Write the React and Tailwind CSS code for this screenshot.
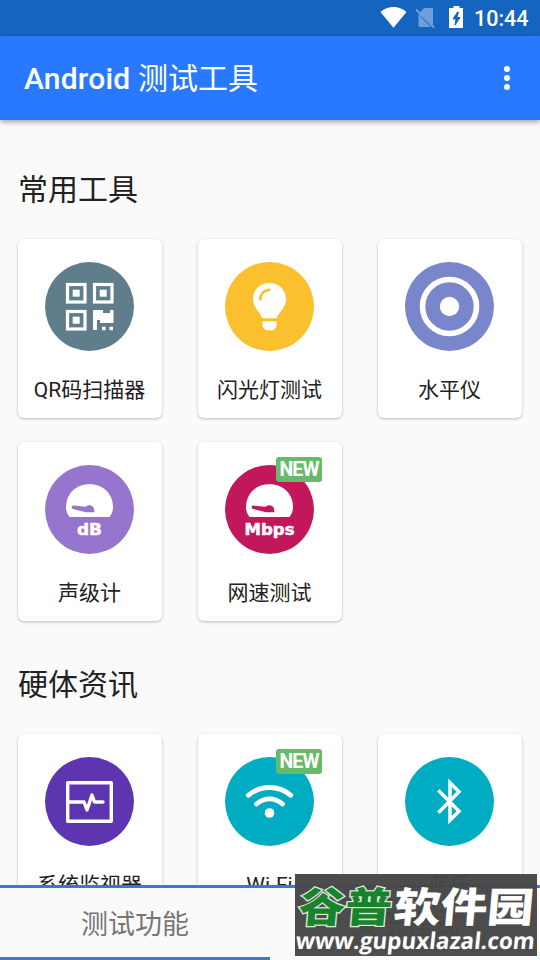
function QrIcon() {
  return (
    <g>
      {[[21, 21], [48, 21], [21, 48]].map(([x, y]) => (
        <g key={`${x}-${y}`}>
          <rect x={x + 1.5} y={y + 1.5} width="17.5" height="17.5" fill="none" stroke="#fff" strokeWidth="3.2" />
          <rect x={x + 6.7} y={y + 6.7} width="7" height="7" fill="#fff" />
        </g>
      ))}
      <path d="M48 48h10v3h7v-3h3.500v13H55v-3h-3v10h-4z" fill="#fff" />
      <path d="M57 64.800h3.500v3.500H57zM64.500 64.800H68v3.500h-3.500z" fill="#fff" />
    </g>
  )
}

function BulbIcon() {
  return (
    <g>
      <path
        d="M44.500 21c-9.500 0-16.500 7-16.500 16 0 8.500 6 11.500 9.500 19.200h14c3.500-7.700 9.500-10.700 9.500-19.200 0-9-7-16-16.500-16z"
        fill="#fff"
      />
      <path d="M35.300 37.300c0-5.300 3.700-9.300 9-9.500" fill="none" stroke="#fbc02d" strokeWidth="2.700" strokeLinecap="round" />
      <path d="M37.500 59.200h14v3.500c0 3-2.500 5.600-5 5.600h-4c-2.500 0-5-2.600-5-5.600z" fill="#fff" />
    </g>
  )
}

function LevelIcon() {
  return (
    <g>
      <circle cx="44.500" cy="44.500" r="27" fill="none" stroke="#fff" strokeWidth="5.600" />
      <circle cx="44.500" cy="44.500" r="9.700" fill="#fff" />
    </g>
  )
}

function GaugeIcon({ color, label, width }) {
  return (
    <g>
      <path d="M24.500 52C22.200 48.500 21 46 21 42.500 21 29.500 30 19.300 44.500 19.300S68 29.500 68 42.500c0 3.500-1.200 6-3.500 9.500z" fill="#fff" />
      <path d="M28.300 40.600l12.300 1.200c1.800-2.400 6.700-2.200 8.200 1.200l.7 4.200H41l-13-3.300c-2-.6-1.600-3.400.3-3.300z" fill={color} />
      <text
        x="44.500"
        y="70.300"
        textAnchor="middle"
        textLength={width}
        lengthAdjust="spacingAndGlyphs"
        fill="#fff"
        stroke="#fff"
        strokeWidth="0.500"
        className="font-['DejaVu_Sans',sans-serif] text-[16px] font-bold"
      >
        {label}
      </text>
    </g>
  )
}

function MonitorIcon() {
  return (
    <g fill="none" stroke="#fff" strokeWidth="3.400" strokeLinejoin="round" strokeLinecap="round">
      <rect x="22.700" y="25.700" width="43.600" height="38.600" />
      <path d="M23 45h16l3 8 5-15 2.500 7H58" />
    </g>
  )
}

function WifiIcon() {
  return (
    <g fill="none" stroke="#fff" strokeWidth="4.800">
      <path d="M23.300 38.300c12.500-10.400 30-10.400 42.500 0" strokeLinecap="round" />
      <path d="M31.500 47c7.800-6.800 18.200-6.800 26 0" strokeLinecap="round" />
      <circle cx="44.500" cy="56" r="4.800" fill="#fff" stroke="none" />
    </g>
  )
}

function BluetoothIcon() {
  return (
    <path
      d="M33.300 33.200L54 54.300 45 63.300V25.700L54 34.700 33.300 55.800"
      fill="none"
      stroke="#fff"
      strokeWidth="3.500"
      strokeMiterlimit="10"
    />
  )
}

const commonTools = [
  { name: 'QR码扫描器', color: '#607d8b', icon: <QrIcon /> },
  { name: '闪光灯测试', color: '#fbc02d', icon: <BulbIcon /> },
  { name: '水平仪', color: '#7986cb', icon: <LevelIcon /> },
  { name: '声级计', color: '#9575cd', icon: <GaugeIcon color="#9575cd" label="dB" width="25" /> },
  { name: '网速测试', color: '#c2185b', icon: <GaugeIcon color="#c2185b" label="Mbps" width="50" />, isNew: true },
]

const hardwareInfo = [
  { name: '系统监视器', color: '#5e35b1', icon: <MonitorIcon /> },
  { name: 'Wi-Fi', color: '#00acc1', icon: <WifiIcon />, isNew: true },
  { name: '蓝牙', color: '#00acc1', icon: <BluetoothIcon /> },
]

function ToolCard({ name, color, icon, isNew }) {
  return (
    <div className="relative flex h-[179px] flex-col items-center rounded-md bg-white pr-px pt-[23px] shadow-[0_1px_3px_rgba(0,0,0,0.26)]">
      <svg viewBox="0 0 89 89" className="size-[89px] shrink-0">
        <circle cx="44.500" cy="44.500" r="44.500" fill={color} />
        {icon}
      </svg>
      <span className="mt-[24px] whitespace-nowrap text-[21px] leading-[30px] text-[#212121]">{name}</span>
      {isNew && (
        <span className="absolute right-5 top-[15px] flex h-[25px] w-[46px] items-center justify-center rounded-[3px] bg-[#66bb6a] text-[19.5px] font-bold tracking-[-0.9px] text-white">
          NEW
        </span>
      )}
    </div>
  )
}

function Section({ title, tools }) {
  return (
    <section>
      <h2 className="px-[18px] text-[30px] leading-[44px] text-[#212121]">{title}</h2>
      <div className="mt-[27px] grid grid-cols-[144px_144px_144px] gap-x-9 gap-y-6 px-[18px]">
        {tools.map((tool) => (
          <ToolCard key={tool.name} {...tool} />
        ))}
      </div>
    </section>
  )
}

function StatusBar() {
  return (
    <div className="flex h-9 shrink-0 items-center bg-[#1565c0] pl-[380px] text-white">
      <svg viewBox="0 0 94 36" className="h-9 w-[94px]">
        <path d="M.500 12C8 5.400 19 5.400 26.500 12L13.500 27.700z" fill="#fff" />
        <g opacity="0.380">
          <path d="M38.500 14.300L44 8h9v17.500zM38.500 14.500V27H51z" fill="#fff" />
          <path d="M36 9.500l18 18" stroke="#fff" strokeWidth="1.800" />
        </g>
        <path d="M69 8h4.500V6h6v2H83v20H69z" fill="#fff" />
        <path d="M77.500 12l-4.500 7h3l-1 6 5-7.500h-3.200l1.700-5.500z" fill="#1565c0" stroke="#1565c0" />
      </svg>
      <span className="pt-px text-[21.500px] leading-9 font-medium">10:44</span>
    </div>
  )
}

function AppBar() {
  return (
    <header className="z-10 flex h-[84px] shrink-0 items-center justify-between bg-[#2979ff] pl-6 pr-[30px] text-white shadow-[0_2px_5px_rgba(0,0,0,0.35)]">
      <h1 className="text-[30px] font-medium">
        <span className="tracking-[0.2px]">Android </span>
        <span className="font-normal">测试工具</span>
      </h1>
      <svg viewBox="0 0 6 24" className="h-6 w-1.5" fill="#fff">
        <circle cx="3" cy="3" r="3" />
        <circle cx="3" cy="12" r="3" />
        <circle cx="3" cy="21" r="3" />
      </svg>
    </header>
  )
}

function TabBar() {
  return (
    <nav className="grid h-[75px] shrink-0 grid-cols-2 border-t-[3px] border-[#3a78d6] bg-[#fafafa] text-[27px] text-[#757575]">
      <div className="flex items-center justify-center border-b-[3px] border-[#3a78d6] pt-1.5">测试功能</div>
      <div className="flex items-center justify-center border-b-[3px] border-transparent pt-1.5">关于程式</div>
    </nav>
  )
}

function SiteMark() {
  return (
    <div className="absolute left-[295px] top-[874px] z-20 h-[82px] w-[242px] bg-[#454545]/96">
      <svg viewBox="0 0 242 82" className="h-[82px] w-[242px]">
        <g className="font-['Noto_Sans_CJK_SC',sans-serif] text-[41px] font-black" transform="skewX(-5)">
          <text
            x="7"
            y="48"
            textLength="93"
            lengthAdjust="spacingAndGlyphs"
            fill="#17832b"
            stroke="#dfe9df"
            strokeWidth="2.500"
            paintOrder="stroke"
          >
            谷普
          </text>
          <text x="102" y="48" textLength="140" lengthAdjust="spacingAndGlyphs" fill="#fff">
            软件园
          </text>
        </g>
        <text
          x="8"
          y="75"
          textLength="239"
          lengthAdjust="spacingAndGlyphs"
          fill="#fff"
          transform="skewX(-6)"
          className="font-['Open_Sans',sans-serif] text-[23px] font-bold"
        >
          www.gupuxlazal.com
        </text>
      </svg>
    </div>
  )
}

export default function App() {
  return (
    <div className="relative flex h-[960px] w-[540px] flex-col overflow-hidden bg-[#fafafa] font-[Roboto,'Noto_Sans_CJK_SC',sans-serif]">
      <StatusBar />
      <AppBar />
      <main className="flex min-h-0 flex-1 flex-col gap-[42px] overflow-hidden pt-[48px]">
        <Section title="常用工具" tools={commonTools} />
        <Section title="硬体资讯" tools={hardwareInfo} />
      </main>
      <TabBar />
      <SiteMark />
    </div>
  )
}
